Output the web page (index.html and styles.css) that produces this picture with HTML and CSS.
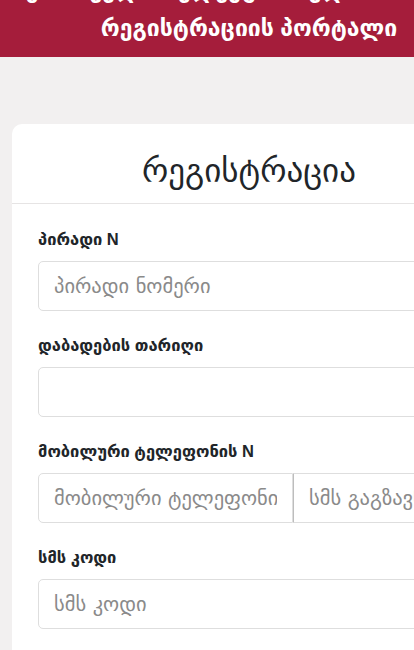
FILE: index.html
```html
<!DOCTYPE html>
<html lang="ka">
<head>
    <meta charset="UTF-8">
    <meta name="viewport" content="width=device-width, initial-scale=1.0">
    <title>რეგისტრაცია</title>
    <link rel="stylesheet" href="styles.css">
</head>
<body>
    <div class="page">
        <header class="top-bar">
            <div class="top-line">საქართველოს ელექტრონული მმართველობის</div>
            <div class="top-line">რეგისტრაციის პორტალი</div>
        </header>

        <div class="card">
            <div class="card-header">რეგისტრაცია</div>
            <form class="card-body">
                <label for="personalId">პირადი N</label>
                <input type="text" id="personalId" placeholder="პირადი ნომერი">

                <label for="birthDate">დაბადების თარიღი</label>
                <input type="text" id="birthDate">

                <label for="phone">მობილური ტელეფონის N</label>
                <div class="input-group">
                    <input type="text" id="phone" class="phone-input" placeholder="მობილური ტელეფონის ნომერი">
                    <input type="text" class="send-input" placeholder="სმს გაგზავნა">
                </div>

                <label for="smsCode">სმს კოდი</label>
                <input type="text" id="smsCode" placeholder="სმს კოდი">
            </form>
        </div>
    </div>
</body>
</html>
```

FILE: styles.css
```css
html, body {
    margin: 0;
    padding: 0;
    overflow: hidden;
}

body {
    font-family: 'Liberation Sans', 'DejaVu Sans', sans-serif;
    background-color: #f2f0f0;
    color: #212529;
}

.page {
    width: 498px;
}

.top-bar {
    background-color: #a51d3b;
    color: white;
    text-align: center;
    font-weight: bold;
    font-size: 23px;
    line-height: 38px;
    margin-top: -29px;
    padding-bottom: 10px;
}

.top-line {
    white-space: nowrap;
}

.card {
    margin: 67px 12px 0;
    background-color: white;
    border-radius: 10px;
}

.card-header {
    text-align: center;
    font-size: 33px;
    padding: 27px 0 13px;
    border-bottom: 1px solid #e6e4e4;
}

.card-body {
    padding: 26px 26px 20px;
    display: flex;
    flex-direction: column;
}

label {
    font-weight: bold;
    font-size: 16.5px;
    margin-bottom: 12px;
}

input[type="text"] {
    box-sizing: border-box;
    width: 100%;
    height: 50px;
    padding: 0 15px;
    border: 1px solid #dedede;
    border-radius: 5px;
    font-family: 'DejaVu Sans', sans-serif;
    font-size: 20.5px;
    color: #495057;
    margin-bottom: 25px;
    background: white;
}

input::placeholder {
    color: #8a8a8a;
}

.input-group {
    display: flex;
    margin-bottom: 25px;
}

.input-group input[type="text"] {
    margin-bottom: 0;
}

.phone-input {
    flex: 0 0 255px;
    border-radius: 5px 0 0 5px !important;
}

.send-input {
    flex: 1;
    border-left: 1px solid #bdbdbd !important;
    border-radius: 0 5px 5px 0 !important;
}
```
